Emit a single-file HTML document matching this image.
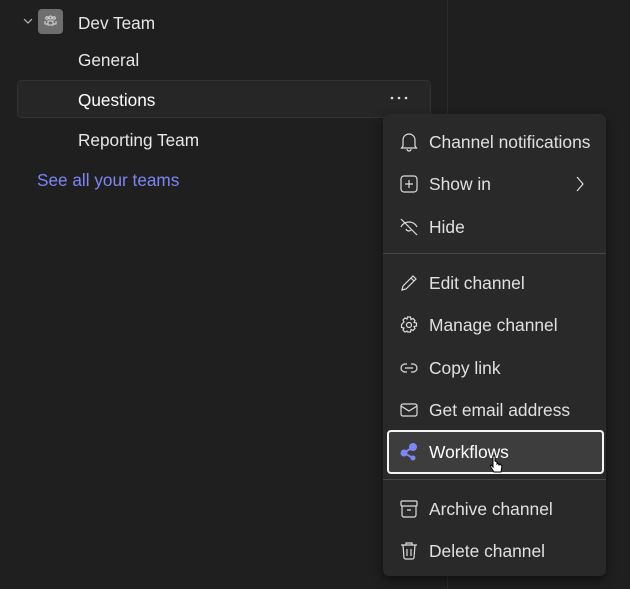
<!DOCTYPE html><html><head><style>
body{margin:0;width:630px;height:589px;background:#1f1f1f;font-family:"Liberation Sans",sans-serif;color:#e6e6e6;position:relative;overflow:hidden}
.t{position:absolute;font-size:17.2px;white-space:nowrap}
.menu{position:absolute;left:383px;top:114px;width:223px;height:462px;background:#292929;border-radius:6px;box-shadow:0 4px 10px rgba(0,0,0,.5)}
.mi{position:absolute;left:0;width:223px;height:40px}
.mi svg{position:absolute;left:16px;top:10px}
.mi span{position:absolute;left:46px;top:10px;font-size:17.4px;color:#e0e0e0;white-space:nowrap}
.sep{position:absolute;left:0;width:223px;height:1px;background:#474747}
</style></head><body>
<div style="position:absolute;left:447px;top:0;width:1px;height:589px;background:#2b2b2b"></div>
<svg style="position:absolute;left:23px;top:17px" width="10" height="8"><path d="M1 2l4 4 4-4" stroke="#bbb" fill="none" stroke-width="1.2"/></svg>
<div style="position:absolute;left:38px;top:9px;width:25px;height:25px;background:#6e6e6e;border-radius:4px"></div>
<svg style="position:absolute;left:44px;top:15px" width="13" height="13"><g stroke="#ddd" fill="none" stroke-width="1"><circle cx="3" cy="3" r="1.3"/><circle cx="6.5" cy="2.5" r="1.5"/><circle cx="10" cy="3" r="1.3"/><path d="M1 6v3h3M12 6v3h-3M4 6h5v4H4z"/></g></svg>
<div class="t" style="left:78px;top:13px">Dev Team</div>
<div class="t" style="left:78px;top:50px">General</div>
<div style="position:absolute;left:17px;top:80px;width:412px;height:36px;background:#262626;border:1px solid #333;border-radius:5px"></div>
<div class="t" style="left:78px;top:90px;color:#fff">Questions</div>
<svg style="position:absolute;left:390px;top:96px" width="18" height="4"><circle cx="2" cy="2" r="1.3" fill="#ddd"/><circle cx="9" cy="2" r="1.3" fill="#ddd"/><circle cx="16" cy="2" r="1.3" fill="#ddd"/></svg>
<div class="t" style="left:78px;top:130px">Reporting Team</div>
<div class="t" style="left:37px;top:170px;color:#7f85f5">See all your teams</div>
<div class="menu">
<div class="mi" style="top:8px"><svg width="20" height="20" fill="none" stroke="#ddd" stroke-width="1.2"><path d="M4 14V8a6 6 0 0112 0v6l1.5 2h-15zM8 17a2 2 0 004 0"/></svg><span>Channel notifications</span></div>
<div class="mi" style="top:50px"><svg width="20" height="20" fill="none" stroke="#ddd" stroke-width="1.2"><rect x="2" y="2" width="16" height="16" rx="3"/><path d="M10 6v8M6 10h8"/></svg><span>Show in</span><svg style="left:190px" width="14" height="20" fill="none" stroke="#ddd" stroke-width="1.2"><path d="M4 3l6 7-6 7"/></svg></div>
<div class="mi" style="top:93px"><svg width="20" height="20" fill="none" stroke="#ddd" stroke-width="1.2"><path d="M2 2l16 16M2 10c2-4 5-5 8-5s6 1 8 5M7 12a3 3 0 005 1"/></svg><span>Hide</span></div>
<div class="sep" style="top:139px"></div>
<div class="mi" style="top:149px"><svg width="20" height="20" fill="none" stroke="#ddd" stroke-width="1.2"><path d="M3 17l1-4L14 3l3 3-10 10zM12 5l3 3"/></svg><span>Edit channel</span></div>
<div class="mi" style="top:191px"><svg width="20" height="20" fill="none" stroke="#ddd" stroke-width="1.2"><circle cx="10" cy="10" r="2.5"/><path d="M8.5 2h3l.5 2.5 2-1 2 2-1 2 2.5.5v3l-2.5.5 1 2-2 2-2-1-.5 2.5h-3L8 16l-2 1-2-2 1-2-2.5-.5v-3L5 7 4 5l2-2 2 1z"/></svg><span>Manage channel</span></div>
<div class="mi" style="top:234px"><svg width="20" height="20" fill="none" stroke="#ddd" stroke-width="1.2"><path d="M8 6H6a4 4 0 000 8h2M12 6h2a4 4 0 010 8h-2M6 10h8"/></svg><span>Copy link</span></div>
<div class="mi" style="top:276px"><svg width="20" height="20" fill="none" stroke="#ddd" stroke-width="1.2"><rect x="2" y="4" width="16" height="12" rx="2"/><path d="M2 6l8 5 8-5"/></svg><span>Get email address</span></div>
<div style="position:absolute;left:4px;top:316px;width:213px;height:40px;background:#3d3d3d;border:2px solid #f5f5f5;border-radius:4px"></div>
<div class="mi" style="top:318px"><svg width="20" height="20"><circle cx="14" cy="5" r="4" fill="#7f85f5"/><circle cx="5" cy="11" r="3.5" fill="#7f85f5"/><circle cx="14" cy="16" r="2.5" fill="#7f85f5"/><path d="M5 11L14 5M5 11l9 5" stroke="#7f85f5" stroke-width="2"/></svg><span style="color:#fff">Workflows</span></div>
<svg style="position:absolute;left:106px;top:340px" width="16" height="22"><path d="M4 2v11l-2-2-1 1 4 6h7l1-6-2-2-1 1-1-2-1 1V8L6 7V2z" fill="#fff" stroke="#000" stroke-width="1"/></svg>
<div class="sep" style="top:365px"></div>
<div class="mi" style="top:375px"><svg width="20" height="20" fill="none" stroke="#ddd" stroke-width="1.2"><rect x="2" y="2" width="16" height="5" rx="1"/><path d="M3 7v9a2 2 0 002 2h10a2 2 0 002-2V7M8 11h4"/></svg><span>Archive channel</span></div>
<div class="mi" style="top:417px"><svg width="20" height="20" fill="none" stroke="#ddd" stroke-width="1.2"><path d="M2 4h16M7 4V2h6v2M4 4l1 13a2 2 0 002 1h6a2 2 0 002-1l1-13M8 8v7M12 8v7"/></svg><span>Delete channel</span></div>
</div>
</body></html>
